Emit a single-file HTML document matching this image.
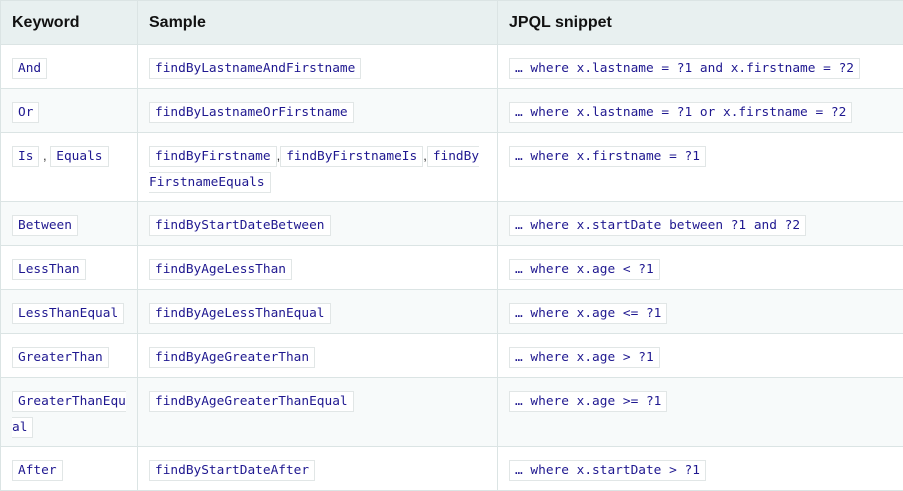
<!DOCTYPE html>
<html><head><meta charset="utf-8"><style>
body{margin:0;background:#fff;width:903px;height:490px;overflow:hidden;font-family:"Liberation Sans","DejaVu Sans",sans-serif}
table{border-collapse:collapse;table-layout:fixed;width:904px;position:absolute;left:0;top:0}
td,th{border:1px solid #dbe4e4;vertical-align:top;text-align:left;padding:0 8px 0 11px;white-space:nowrap;overflow:hidden}
th{background:#e8f0f0;height:43px;font-size:16px;font-weight:bold;color:#111;vertical-align:middle;font-family:"Liberation Sans",sans-serif}
td{padding-top:10px;line-height:25px;font-size:13px;color:#333}
tr.s td{background:#f7fafa}
code{font-family:"DejaVu Sans Mono",monospace;font-size:12.8px;color:#1f1890;background:#fff;border:1px solid #e1e6e6;padding:2px 5px}
</style></head><body>
<table>
<colgroup><col style="width:137px"><col style="width:360px"><col style="width:407px"></colgroup>
<tr><th>Keyword</th><th>Sample</th><th>JPQL snippet</th></tr>
<tr style="height:44px"><td><code>And</code></td><td><code>findByLastnameAndFirstname</code></td><td><code>… where x.lastname = ?1 and x.firstname = ?2</code></td></tr>
<tr class="s" style="height:44px"><td><code>Or</code></td><td><code>findByLastnameOrFirstname</code></td><td><code>… where x.lastname = ?1 or x.firstname = ?2</code></td></tr>
<tr style="height:69px"><td><code>Is</code> , <code>Equals</code></td><td><code>findByFirstname</code>,<code>findByFirstnameIs</code>,<code>findBy<br>FirstnameEquals</code></td><td><code>… where x.firstname = ?1</code></td></tr>
<tr class="s" style="height:44px"><td><code>Between</code></td><td><code>findByStartDateBetween</code></td><td><code>… where x.startDate between ?1 and ?2</code></td></tr>
<tr style="height:44px"><td><code>LessThan</code></td><td><code>findByAgeLessThan</code></td><td><code>… where x.age &lt; ?1</code></td></tr>
<tr class="s" style="height:44px"><td><code>LessThanEqual</code></td><td><code>findByAgeLessThanEqual</code></td><td><code>… where x.age &lt;= ?1</code></td></tr>
<tr style="height:44px"><td><code>GreaterThan</code></td><td><code>findByAgeGreaterThan</code></td><td><code>… where x.age &gt; ?1</code></td></tr>
<tr class="s" style="height:69px"><td><code>GreaterThanEqu<br>al</code></td><td><code>findByAgeGreaterThanEqual</code></td><td><code>… where x.age &gt;= ?1</code></td></tr>
<tr style="height:44px"><td><code>After</code></td><td><code>findByStartDateAfter</code></td><td><code>… where x.startDate &gt; ?1</code></td></tr>
</table>
</body></html>
